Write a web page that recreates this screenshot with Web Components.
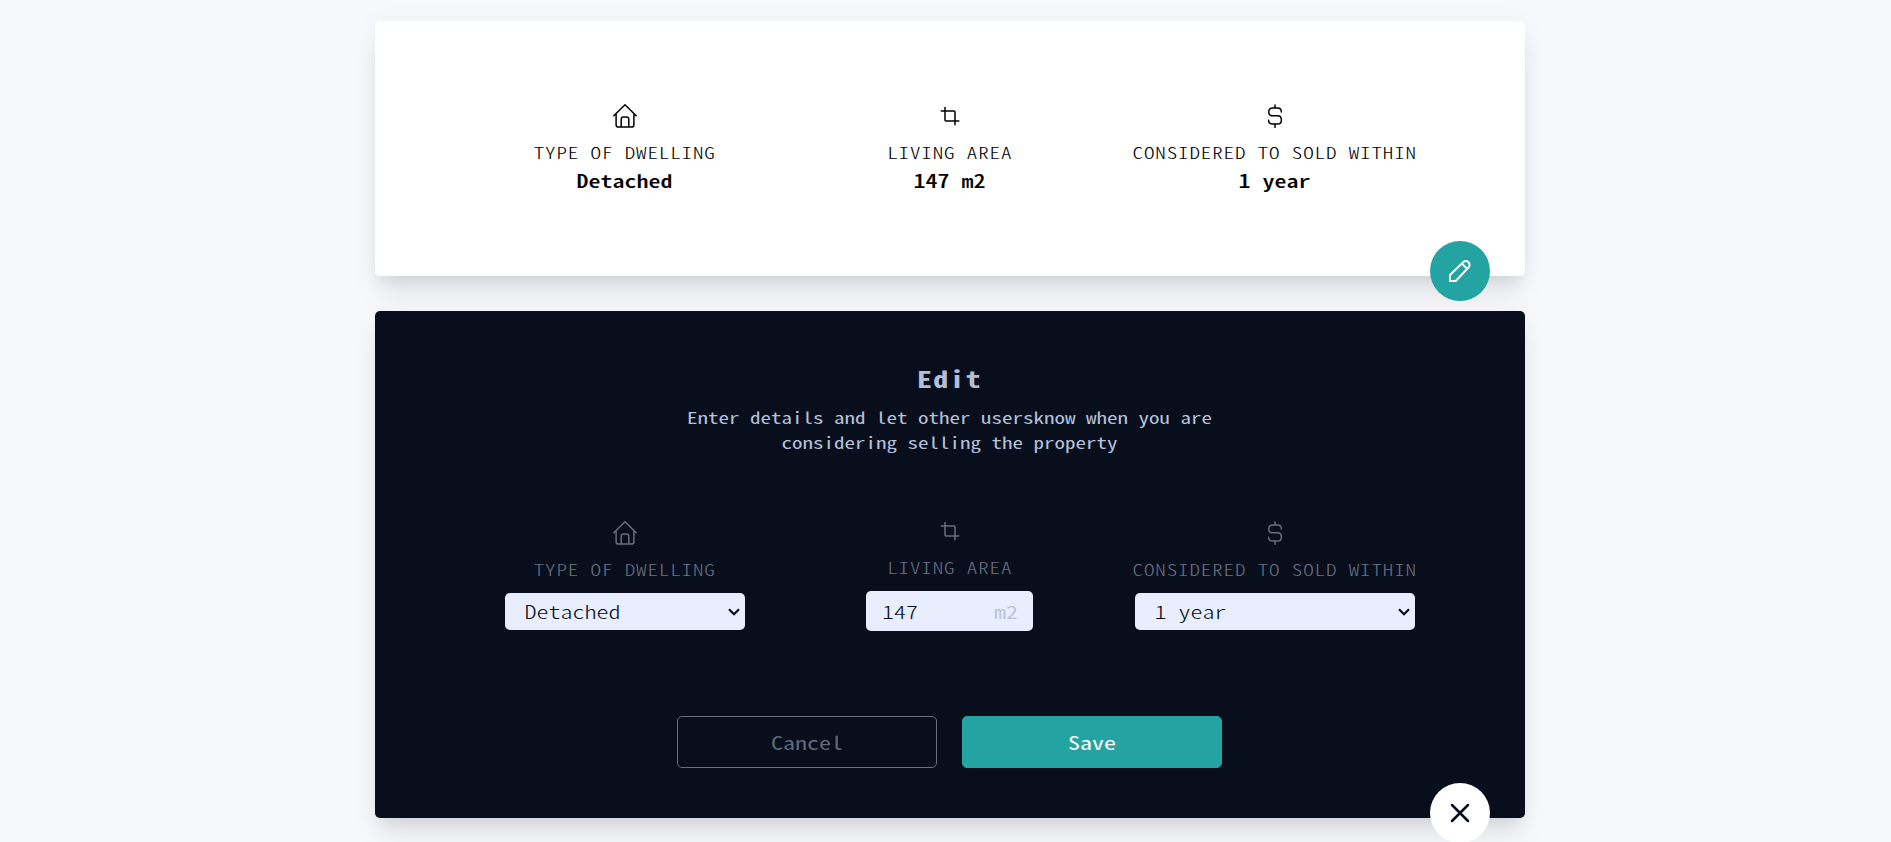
<!DOCTYPE html>
<html lang="en">
<head>
<meta charset="utf-8">
<title>Property details</title>
<style>
html, body { margin: 0; height: 100%; overflow: hidden; }
body {
  background: #f7f8fc; color: #000;
  font-family: "Noto Sans CJK SC", "Liberation Mono", monospace;
  font-feature-settings: "hwid" 1;
  font-size: 24px;
}
</style>
</head>
<body>
<property-page></property-page>
<script>
const icons = {
  home: '<svg width="24" height="24" viewBox="0 0 24 24"><path d="M.8 11.700 12 .8l11.200 10.900M3.100 10.500v10.200q0 2.400 2.300 2.400h13.200q2.300 0 2.300-2.400V10.500M8.200 23v-7.800q0-2.200 2.200-2.200h3.200q2.200 0 2.200 2.200V23"/></svg>',
  crop: '<svg width="24" height="24" viewBox="0 0 24 24"><path d="M7 3.400v12.600q0 1 1 1h12.800M3.300 7h12.700q1 0 1 1v12.700"/></svg>',
  dollar: '<svg width="24" height="24" viewBox="0 0 24 24"><path d="M12 .9v3M12 20v3.300M18.300 8V7.500q0-3.500-3.800-3.500H9.600q-3.800 0-3.800 3.900t3.800 3.900h4.900q3.900 0 3.900 4.100t-3.900 4.100H9.500q-3.900 0-3.900-3.700"/></svg>'
};
function define(name, html, setup) {
  const t = document.createElement('template');
  t.innerHTML = html;
  customElements.define(name, class extends HTMLElement {
    constructor() {
      super();
      this.attachShadow({ mode: 'open' }).append(t.content.cloneNode(true));
    }
    connectedCallback() { if (setup) setup(this, this.shadowRoot); }
  });
}
define('line-icon', `<style>
  :host { display: block; height: 24px; margin-left: 1px; }
  svg { display: block; fill: none; stroke: currentColor; stroke-width: 1.5; stroke-linecap: round; stroke-linejoin: round; }
</style><div></div>`, (el, root) => { root.querySelector('div').innerHTML = icons[el.getAttribute('name')]; });

/* Half-width glyphs are tall and narrow; this flattens them to the usual monospace proportions. */
define('mono-text', `<style>
  :host { display: block; transform: scaleY(.765); white-space: nowrap; }
</style><slot></slot>`);

define('detail-item', `<style>
  :host { display: flex; flex-direction: column; align-items: center; }
  .label { margin: 12.300px 0 -.3px .5px; font-size: 21px; line-height: 25px; letter-spacing: .875px; font-weight: 300; }
</style><span id="icon"></span><mono-text class="label"></mono-text><slot></slot>`, (el, root) => {
  const icon = document.createElement('line-icon');
  icon.setAttribute('name', el.getAttribute('icon'));
  root.querySelector('#icon').replaceWith(icon);
  root.querySelector('.label').textContent = el.getAttribute('label');
});

define('round-button', `<style>
  :host { display: block; position: absolute; right: 35px; bottom: -25px; }
  button { display: flex; align-items: center; justify-content: center; width: 60px; height: 60px; padding: 0; border: 0; border-radius: 50%; background: var(--fill); color: var(--ink); }
</style><button><slot></slot></button>`);

define('panel-card', `<style>
  :host { display: block; position: relative; box-sizing: border-box; width: 1150px; border-radius: 5px;
    box-shadow: 0 20px 25px -5px rgba(0,0,0,.1), 0 10px 10px -5px rgba(0,0,0,.04), 0 0 25px rgba(0,0,0,.04); }
</style><slot></slot>`);

define('action-button', `<style>
  :host { display: block; }
  button { display: block; box-sizing: border-box; width: 260px; height: 52px; padding: 0; border: 1px solid var(--line); border-radius: 5px; background: var(--fill); color: var(--ink); font: inherit; font-weight: var(--weight); font-feature-settings: inherit; line-height: 50px; }
</style><button><mono-text><slot></slot></mono-text></button>`);

define('choice-field', `<style>
  :host { display: flex; align-items: center; justify-content: space-between; box-sizing: border-box; width: var(--w); height: 37px; margin-top: 11px; padding: 0 5px 0 20px; border-radius: 5px; background: #e9eeff; color: #070d1b; font-weight: 300; line-height: 36px; }
  mono-text { margin-top: -1px; }
  svg { display: block; fill: none; stroke: currentColor; stroke-width: 2.200; }
</style><mono-text><slot></slot></mono-text><svg width="12" height="8" viewBox="0 0 12 8"><path d="M1 1.200l5 5 5-5"/></svg>`);

define('area-field', `<style>
  :host { display: flex; align-items: center; box-sizing: border-box; width: 167px; height: 40px; margin-top: 11px; padding: 0 15px 1px; border-radius: 5px; background: #e9eeff; color: #070d1b; font-weight: 300; line-height: 38px; }
  input { flex: 1; min-width: 0; height: 38px; padding: 0 0 0 1px; border: 0; outline: 0; background: none; color: inherit; font: inherit; font-feature-settings: inherit; transform: scaleY(.765); }
  mono-text { color: #bcc0d5; font-weight: 350; }
</style><input value="147"><mono-text>m2</mono-text>`);

define('property-page', `<style>
  :host { display: flex; flex-direction: column; gap: 35px; padding: 21px 0 0 375px; }
  .view { height: 255px; background: #fff; padding: 83px 88px 0 87px; }
  .edit { height: 507px; background: #080e1c; padding: 50px 88px 0 87px; color: #6a6f80; }
  .row { display: grid; grid-template-columns: repeat(3, 325px); }
  .value { margin-top: 0; font-weight: 500; line-height: 30px; }
  h2 { margin: 0; font-size: 30px; line-height: 35px; letter-spacing: 1.25px; text-align: center; color: #b7bdd4; font-weight: 700; }
  p { margin: 9px auto 0; font-size: 21px; line-height: 25px; text-align: center; color: #b7c1da; }
  .edit .row { margin-top: 66px; }
  .middle { margin-top: -2px; }
  .actions { display: flex; justify-content: center; gap: 25px; margin-top: 85px; }
  .cancel { --line: #6a6f80; --fill: transparent; --ink: #62677a; --weight: 400; }
  .save { --line: #24a3a3; --fill: #24a3a3; --ink: #fff; --weight: 400; }
  .pen { --fill: #24a3a3; --ink: #fff; }
  .close { --fill: #fff; --ink: #070d1b; }
  svg { display: block; fill: none; stroke: currentColor; stroke-width: 2; stroke-linecap: round; stroke-linejoin: round; }
</style>
<panel-card class="view">
  <div class="row">
    <detail-item icon="home" label="TYPE OF DWELLING"><mono-text class="value">Detached</mono-text></detail-item>
    <detail-item icon="crop" label="LIVING AREA"><mono-text class="value">147 m2</mono-text></detail-item>
    <detail-item icon="dollar" label="CONSIDERED TO SOLD WITHIN"><mono-text class="value">1 year</mono-text></detail-item>
  </div>
  <round-button class="pen"><svg width="24" height="24" viewBox="0 0 24 24" style="stroke-linejoin:miter"><path d="M2 22v-6L15.200 3.200a3.700 3.700 0 0 1 5.300 5.300L7.700 22ZM13.900 4.600l5.200 5.200"/></svg></round-button>
</panel-card>
<panel-card class="edit">
  <h2><mono-text>Edit</mono-text></h2>
  <p><mono-text>Enter details and let other usersknow when you are</mono-text><mono-text>considering selling the property</mono-text></p>
  <div class="row">
    <detail-item icon="home" label="TYPE OF DWELLING"><choice-field style="--w:240px">Detached</choice-field></detail-item>
    <detail-item class="middle" icon="crop" label="LIVING AREA"><area-field></area-field></detail-item>
    <detail-item icon="dollar" label="CONSIDERED TO SOLD WITHIN"><choice-field style="--w:280px">1 year</choice-field></detail-item>
  </div>
  <div class="actions"><action-button class="cancel">Cancel</action-button><action-button class="save">Save</action-button></div>
  <round-button class="close"><svg width="20" height="20" viewBox="0 0 20 20" style="stroke-width:2.500"><path d="M2 2l16 16M18 2 2 18"/></svg></round-button>
</panel-card>`);
</script>
</body>
</html>
